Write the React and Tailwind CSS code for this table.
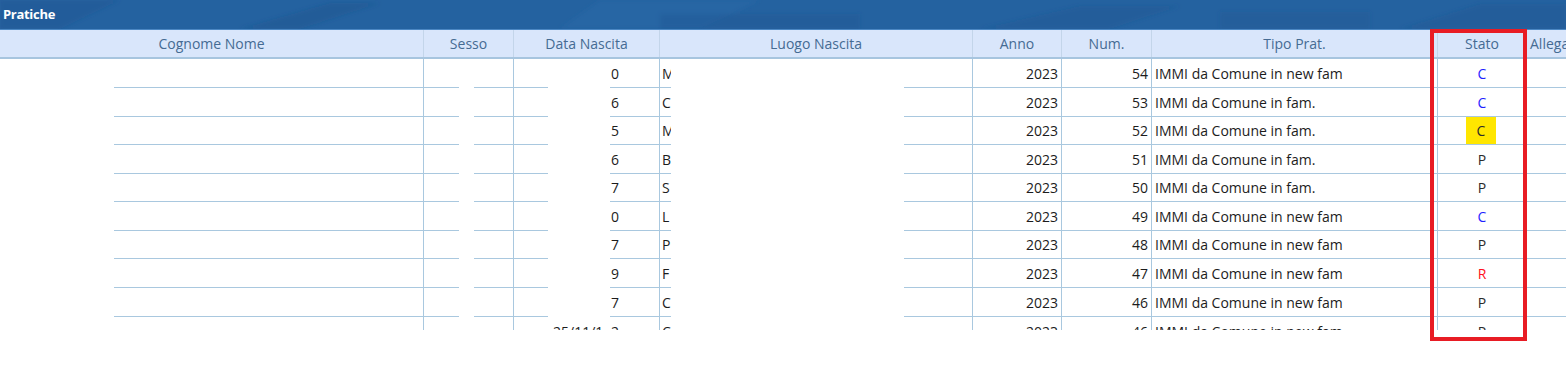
import React from 'react'

const COLS = [
  { key: 'nome', label: 'Cognome Nome', w: 'w-[424px]' },
  { key: 'sesso', label: 'Sesso', w: 'w-[90px]' },
  { key: 'data', label: 'Data Nascita', w: 'w-[146px]' },
  { key: 'luogo', label: 'Luogo Nascita', w: 'w-[313px]' },
  { key: 'anno', label: 'Anno', w: 'w-[89px]' },
  { key: 'num', label: 'Num.', w: 'w-[90px]' },
  { key: 'tipo', label: 'Tipo Prat.', w: 'w-[286px]' },
  { key: 'stato', label: 'Stato', w: 'w-[89px]' },
]

const NEW = 'IMMI da Comune in new fam'
const FAM = 'IMMI da Comune in fam.'

const ROWS = [
  { h: 'h-[29px]', d: '0', l: 'M', num: 54, tipo: NEW, stato: 'C' },
  { h: 'h-[29px]', d: '6', l: 'C', num: 53, tipo: FAM, stato: 'C' },
  { h: 'h-[28px]', d: '5', l: 'M', num: 52, tipo: FAM, stato: 'C', mark: true },
  { h: 'h-[29px]', d: '6', l: 'B', num: 51, tipo: FAM, stato: 'P' },
  { h: 'h-[28px]', d: '7', l: 'S', num: 50, tipo: FAM, stato: 'P' },
  { h: 'h-[29px]', d: '0', l: 'L', num: 49, tipo: NEW, stato: 'C' },
  { h: 'h-[28px]', d: '7', l: 'P', num: 48, tipo: NEW, stato: 'P' },
  { h: 'h-[29px]', d: '9', l: 'F', num: 47, tipo: NEW, stato: 'R' },
  { h: 'h-[29px]', d: '7', l: 'C', num: 46, tipo: NEW, stato: 'P' },
  { h: 'h-[29px]', d: '2', l: 'C', num: 46, tipo: NEW, stato: 'P', pre: '25/11/1' },
]

const STATO_COLOR = { C: 'text-[#1f1fff]', P: 'text-[#2b2b2b]', R: 'text-[#ff1020]' }

// bottom line drawn in pieces (the data was blanked out in the capture)
function Seg({ parts }) {
  return (
    <div className="flex h-px shrink-0">
      {parts.map(([w, on], i) => (
        <div key={i} className={`${w} h-px ${on ? 'bg-[#a9c8df]' : ''}`} />
      ))}
    </div>
  )
}

function Cell({ w, parts, children, className = '' }) {
  return (
    <div className={`${w} shrink-0 flex flex-col border-r border-[#a9c8df]`}>
      <div className={`flex-1 flex items-center min-h-0 ${className}`}>{children}</div>
      <Seg parts={parts} />
    </div>
  )
}

const FULL = [['flex-1', true]]

function Row({ r }) {
  return (
    <div className={`flex ${r.h} shrink-0`}>
      <Cell w="w-[424px]" parts={[['w-[114px]', false], ['flex-1', true]]} />
      <Cell w="w-[90px]" parts={[['w-[35px]', true], ['w-[15px]', false], ['flex-1', true]]} />
      <Cell w="w-[146px]" parts={[['w-[34px]', true], ['w-[62px]', false], ['flex-1', true]]}>
        {r.pre ? (
          <div className="flex pl-[39px]">
            <span className="w-[58px] overflow-hidden whitespace-nowrap">{r.pre}</span>
            <span>{r.d}</span>
          </div>
        ) : (
          <span className="pl-[97px]">{r.d}</span>
        )}
      </Cell>
      <Cell w="w-[313px]" parts={[['w-[11px]', true], ['w-[233px]', false], ['flex-1', true]]}>
        <span className="ml-[2px] w-[9px] overflow-hidden">{r.l}</span>
      </Cell>
      <Cell w="w-[89px]" parts={FULL} className="justify-end pr-[3px]">2023</Cell>
      <Cell w="w-[90px]" parts={FULL} className="justify-end pr-[3px]">{r.num}</Cell>
      <Cell w="w-[286px]" parts={FULL} className="pl-[3px] whitespace-nowrap">{r.tipo}</Cell>
      <Cell w="w-[89px]" parts={FULL} className="justify-center">
        {r.mark ? (
          <span className="flex items-center justify-center w-[30px] h-[27px] bg-[#ffe600] text-[#2b2b2b] -ml-[2px]">
            {r.stato}
          </span>
        ) : (
          <span className={STATO_COLOR[r.stato]}>{r.stato}</span>
        )}
      </Cell>
      <div className="flex-1 flex flex-col">
        <div className="flex-1" />
        <Seg parts={FULL} />
      </div>
    </div>
  )
}

export default function App() {
  return (
    <div className="relative w-[1566px] h-[367px] bg-white overflow-hidden font-['Open_Sans',sans-serif] text-[14px]">
      {/* title bar */}
      <div className="relative h-[30px] bg-[#2462a0] border-b border-[#4b87c3] overflow-hidden">
        <svg className="absolute inset-0" width="1566" height="29" viewBox="0 0 1566 29">
          <defs>
            <filter id="soft"><feGaussianBlur stdDeviation="2" /></filter>
          </defs>
          <g filter="url(#soft)">
            <polygon points="0,0 120,0 60,29 0,29" fill="#1a4f8a" opacity="0.3" />
            <polygon points="240,29 330,3 380,3 300,29" fill="#1a4d85" opacity="0.3" />
            <polygon points="600,0 760,0 700,29 560,29" fill="#2e6dac" opacity="0.3" />
            <rect x="660" y="14" width="200" height="15" fill="#1d5189" opacity="0.25" />
            <polygon points="980,29 1080,6 1180,6 1110,29" fill="#1c4f87" opacity="0.25" />
            <rect x="1220" y="12" width="150" height="17" fill="#1d5189" opacity="0.2" />
            <polygon points="1400,29 1480,4 1566,4 1566,29" fill="#1c4f87" opacity="0.25" />
          </g>
        </svg>
        <div className="relative pl-[3px] h-[29px] flex items-center font-bold text-white text-[13px] tracking-[-0.3px]">
          Pratiche
        </div>
      </div>

      {/* header */}
      <div className="flex h-[29px] bg-[#d9e6fb] border-b-2 border-[#a7c5df] text-[#456b93]">
        {COLS.map(c => (
          <div key={c.key} className={`${c.w} shrink-0 flex items-center justify-center border-r border-[#c3d5ea]`}>
            {c.label}
          </div>
        ))}
        <div className="flex-1 flex items-center pl-[3px] whitespace-nowrap overflow-hidden">Allegati</div>
      </div>

      {/* body */}
      <div className="h-[271px] overflow-hidden flex flex-col text-[#1c1c1c]">
        {ROWS.map((r, i) => <Row key={i} r={r} />)}
      </div>

      {/* red annotation box */}
      <div className="absolute left-[1430px] top-[29px] w-[97px] h-[312px] border-4 border-[#e81c24]" />
    </div>
  )
}
